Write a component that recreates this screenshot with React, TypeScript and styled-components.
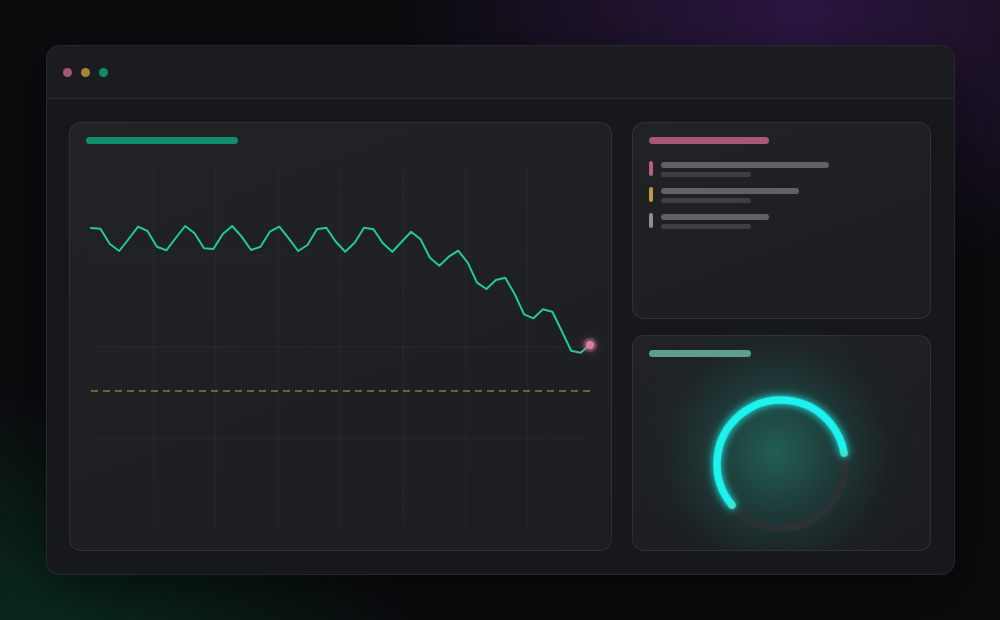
import React from "react";
import styled, { createGlobalStyle } from "styled-components";

const Global = createGlobalStyle`
  html, body { margin: 0; padding: 0; }
  body {
    width: 1000px;
    height: 620px;
    overflow: hidden;
    font-family: "Inter", "Liberation Sans", sans-serif;
    background:
      radial-gradient(ellipse 400px 260px at 800px 20px, rgba(58, 28, 88, 0.7), rgba(40, 20, 60, 0) 100%),
      radial-gradient(ellipse 360px 240px at 50px 630px, rgba(8, 58, 38, 0.7), rgba(8, 40, 28, 0) 100%),
      #0c0c0f;
  }
`;

const Page = styled.div`
  padding: 45px 0 0 46px;
`;

const Window = styled.div`
  width: 909px;
  height: 530px;
  box-sizing: border-box;
  border-radius: 14px;
  border: 1px solid rgba(255, 255, 255, 0.07);
  background: #17181b;
  box-shadow: 0 20px 60px rgba(0, 0, 0, 0.5);
  display: flex;
  flex-direction: column;
  overflow: hidden;
`;

const TitleBar = styled.div`
  height: 52px;
  flex: none;
  display: flex;
  align-items: center;
  gap: 9px;
  padding-left: 16px;
  background: #1b1c20;
  border-bottom: 1px solid #2a2b30;
`;

const Dot = styled.span<{ $c: string }>`
  width: 9px;
  height: 9px;
  border-radius: 50%;
  background: ${(p) => p.$c};
`;

const Body = styled.div`
  flex: 1;
  display: grid;
  grid-template-columns: 543px 299px;
  gap: 20px;
  padding: 23px 23px 23px 22px;
`;

const Card = styled.div`
  box-sizing: border-box;
  border-radius: 12px;
  border: 1px solid rgba(255, 255, 255, 0.08);
  background: linear-gradient(160deg, #202226 0%, #1c1e22 100%);
  padding: 14px 16px;
  position: relative;
  overflow: hidden;
`;

const ChartCard = styled(Card)`
  height: 429px;
`;

const Side = styled.div`
  display: flex;
  flex-direction: column;
  gap: 16px;
`;

const ListCard = styled(Card)`
  height: 197px;
`;

const GaugeCard = styled(Card)`
  height: 216px;
  background:
    radial-gradient(circle 150px at 48% 54%, rgba(36, 112, 96, 0.78) 0%, rgba(32, 92, 82, 0.45) 40%, rgba(30, 50, 50, 0.12) 75%, rgba(30, 34, 38, 0) 100%),
    linear-gradient(160deg, #1f2226 0%, #1b1d21 100%);
`;

const TitleBarPill = styled.div<{ $w: number; $c: string }>`
  width: ${(p) => p.$w}px;
  height: 7px;
  border-radius: 4px;
  background: ${(p) => p.$c};
`;

const ChartSvg = styled.svg`
  display: block;
  margin-top: 21px;
  overflow: visible;
`;

const List = styled.div`
  margin-top: 17px;
  display: flex;
  flex-direction: column;
  gap: 10px;
`;

const Row = styled.div`
  display: flex;
  gap: 8px;
  align-items: flex-start;
`;

const Accent = styled.div<{ $c: string }>`
  width: 4px;
  height: 15px;
  border-radius: 2px;
  background: ${(p) => p.$c};
`;

const Lines = styled.div`
  display: flex;
  flex-direction: column;
  gap: 4px;
  padding-top: 1px;
`;

const Line = styled.div<{ $w: number; $h: number; $c: string }>`
  width: ${(p) => p.$w}px;
  height: ${(p) => p.$h}px;
  border-radius: 3px;
  background: ${(p) => p.$c};
`;

const RingWrap = styled.div`
  display: flex;
  justify-content: center;
  margin-top: 35px;
  padding-right: 1px;
`;

const ys = [
  228, 228.7, 244, 251, 239, 226.7, 231, 246.7, 250.3, 238, 226, 233.3, 248.3, 249,
  234, 226, 236.7, 250, 246.7, 231.7, 226.7, 238.3, 251, 245, 229.3, 227.7, 241.7,
  251.7, 242.7, 227.7, 229.3, 243.3, 251.7, 241.7, 231.7, 239.3, 257.7, 265.7, 256.7,
  250.7, 262.3, 282.7, 289, 280, 277.7, 294, 314.3, 318.3, 309.3, 311.7, 331, 350.7,
  352.7, 345,
];

// svg origin at page (86, 165)
const OX = 86;
const OY = 165;
const pts = ys.map((y, i) => [91 + (i * 499) / (ys.length - 1) - OX, y - OY]);
const path = pts.map((p, i) => `${i ? "L" : "M"}${p[0].toFixed(2)} ${p[1].toFixed(2)}`).join(" ");
const vLines = [153.4, 215.8, 278.2, 340.6, 403, 465.4, 527.8];
const hLines = [256, 347, 438];

const Chart = () => (
  <ChartSvg width={511} height={368} viewBox="0 0 511 368">
    <defs>
      <filter id="pinkGlow" x="-200%" y="-200%" width="500%" height="500%">
        <feGaussianBlur stdDeviation="3.5" result="b" />
        <feMerge>
          <feMergeNode in="b" />
          <feMergeNode in="SourceGraphic" />
        </feMerge>
      </filter>
    </defs>
    {vLines.map((x) => (
      <line key={x} x1={x - OX} x2={x - OX} y1={3} y2={363} stroke="rgba(255,255,255,0.045)" strokeWidth={1} />
    ))}
    {hLines.map((y) => (
      <line key={y} x1={5} x2={504} y1={y - OY} y2={y - OY} stroke="rgba(255,255,255,0.045)" strokeWidth={1} />
    ))}
    <line x1={5} x2={504} y1={391 - OY} y2={391 - OY} stroke="#8c7440" strokeWidth={1.3} strokeDasharray="7 5" />
    <path d={path} fill="none" stroke="#22c9a0" strokeWidth={2} strokeLinejoin="round" strokeLinecap="round" />
    <circle cx={590 - OX} cy={345 - OY} r={7} fill="rgba(232,120,165,0.3)" filter="url(#pinkGlow)" />
    <circle cx={590 - OX} cy={345 - OY} r={4.2} fill="#d67ea3" />
  </ChartSvg>
);

const R = 64;
const C = 2 * Math.PI * R;
const start = 140;
const sweep = 210;
const rad = (d: number) => (d * Math.PI) / 180;

const Ring = () => {
  const cx = 72;
  const cy = 72;
  const sx = cx + R * Math.cos(rad(start));
  const sy = cy + R * Math.sin(rad(start));
  const ex = cx + R * Math.cos(rad(start + sweep));
  const ey = cy + R * Math.sin(rad(start + sweep));
  return (
    <svg width={144} height={144} viewBox="0 0 144 144" style={{ overflow: "visible" }}>
      <defs>
        <filter id="cyanGlow" x="-50%" y="-50%" width="200%" height="200%">
          <feGaussianBlur stdDeviation="4" result="b" />
          <feMerge>
            <feMergeNode in="b" />
            <feMergeNode in="SourceGraphic" />
          </feMerge>
        </filter>
      </defs>
      <circle cx={cx} cy={cy} r={R} fill="none" stroke="#2c3134" strokeWidth={7} />
      <circle
        cx={cx}
        cy={cy}
        r={R}
        fill="none"
        stroke="#1ff3ee"
        strokeWidth={7.5}
        strokeLinecap="round"
        strokeDasharray={`${(C * sweep) / 360} ${C}`}
        transform={`rotate(${start} ${cx} ${cy})`}
        filter="url(#cyanGlow)"
      />
      <circle cx={sx} cy={sy} r={3.2} fill="#3fe2c4" />
      <circle cx={ex} cy={ey} r={3.2} fill="#3fe2c4" />
    </svg>
  );
};

const rows = [
  { c: "#b5607f", w: 168 },
  { c: "#bf9843", w: 138 },
  { c: "#8b8e93", w: 108 },
];

export default function App() {
  return (
    <>
      <Global />
      <Page>
        <Window>
          <TitleBar>
            <Dot $c="#a5566f" />
            <Dot $c="#a8853b" />
            <Dot $c="#0f8c6e" />
          </TitleBar>
          <Body>
            <ChartCard>
              <TitleBarPill $w={152} $c="#0f8f6d" />
              <Chart />
            </ChartCard>
            <Side>
              <ListCard>
                <TitleBarPill $w={120} $c="#a8587b" />
                <List>
                  {rows.map((r) => (
                    <Row key={r.c}>
                      <Accent $c={r.c} />
                      <Lines>
                        <Line $w={r.w} $h={6} $c="#606267" />
                        <Line $w={90} $h={5} $c="#3d3f44" />
                      </Lines>
                    </Row>
                  ))}
                </List>
              </ListCard>
              <GaugeCard>
                <TitleBarPill $w={102} $c="#5d9f88" />
                <RingWrap>
                  <Ring />
                </RingWrap>
              </GaugeCard>
            </Side>
          </Body>
        </Window>
      </Page>
    </>
  );
}
